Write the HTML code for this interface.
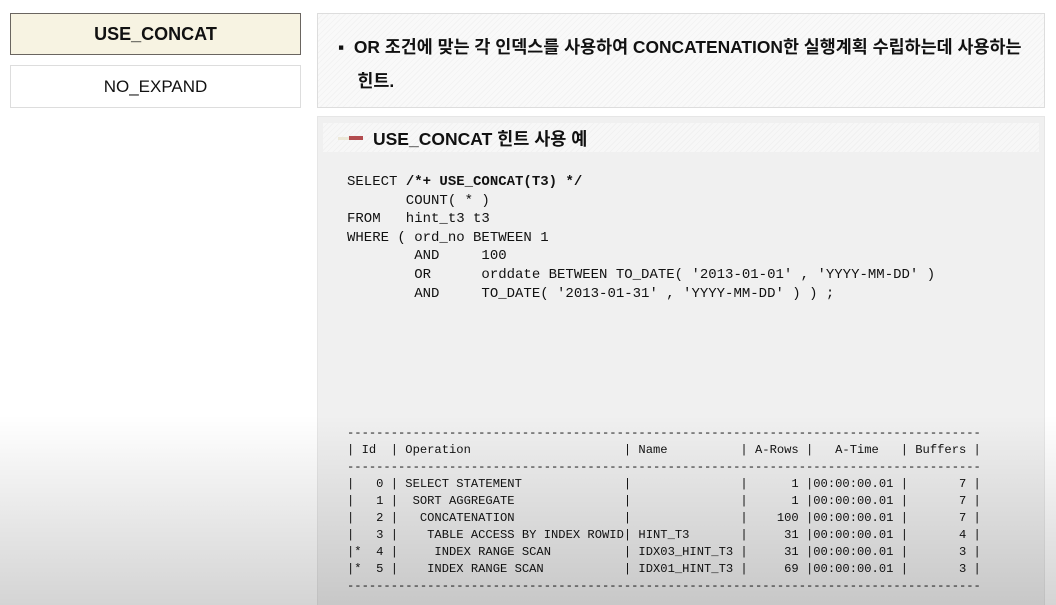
<!DOCTYPE html>
<html><head><meta charset="utf-8"><style>
*{margin:0;padding:0;box-sizing:border-box}
html,body{width:1056px;height:605px;overflow:hidden}
body{background:#fff;position:relative;font-family:"Liberation Sans","Noto Sans CJK KR",sans-serif;color:#111}
.b1{position:absolute;left:10px;top:13px;width:291px;height:42px;background:#f7f3e2;border:1px solid #6a6560;text-align:center;font-weight:bold;font-size:18px;line-height:40px}
.b2{position:absolute;left:10px;top:65px;width:291px;height:43px;background:#fff;border:1px solid #ddd;text-align:center;font-size:17px;line-height:41px}
.p1{position:absolute;left:317px;top:13px;width:728px;height:95px;background:repeating-linear-gradient(135deg,#f9f9f9 0 3px,#f3f3f3 3px 4px);border:1px solid #ddd}
.p1 .t{position:absolute;left:20px;top:16px;font-weight:bold;font-size:17.4px;line-height:34px;white-space:nowrap}
.p2{position:absolute;left:317px;top:116px;width:728px;height:489px;background:#f0f0f0;border:1px solid #e6e6e6;border-bottom:none}
.strip{position:absolute;left:5px;top:6px;width:716px;height:29px;background:repeating-linear-gradient(135deg,#f7f7f7 0 3px,#f1f1f1 3px 4px)}
.strip .d1{position:absolute;left:15px;top:14px;width:11px;height:3px;background:#ece8d8}
.strip .d2{position:absolute;left:26px;top:13px;width:14px;height:4px;background:#b24c4f}
.strip .tt{position:absolute;left:50px;top:3px;font-weight:bold;font-size:17.5px}
pre{position:absolute;font-family:"Liberation Mono",monospace;color:#111}
.code{left:29px;top:56px;font-size:14px;line-height:18.6px}
.tab{left:29px;top:308px;font-size:12.15px;line-height:17px}
.ov{position:absolute;left:0;top:415px;width:1056px;height:190px;background:linear-gradient(rgba(0,0,0,0),rgba(0,0,0,0.17));pointer-events:none}
</style></head><body>
<div class="b1">USE_CONCAT</div>
<div class="b2">NO_EXPAND</div>
<div class="p1"><div class="t">▪&nbsp; OR 조건에 맞는 각 인덱스를 사용하여 CONCATENATION한 실행계획 수립하는데 사용하는<br>&nbsp;&nbsp;&nbsp;&nbsp;힌트.</div></div>
<div class="p2">
<div class="strip"><div class="d1"></div><div class="d2"></div><div class="tt">USE_CONCAT 힌트 사용 예</div></div>
<pre class="code">SELECT <b>/*+ USE_CONCAT(T3) */</b>
       COUNT( * )
FROM   hint_t3 t3
WHERE ( ord_no BETWEEN 1
        AND     100
        OR      orddate BETWEEN TO_DATE( '2013-01-01' , 'YYYY-MM-DD' )
        AND     TO_DATE( '2013-01-31' , 'YYYY-MM-DD' ) ) ;</pre>
<pre class="tab">---------------------------------------------------------------------------------------
| Id  | Operation                     | Name          | A-Rows |   A-Time   | Buffers |
---------------------------------------------------------------------------------------
|   0 | SELECT STATEMENT              |               |      1 |00:00:00.01 |       7 |
|   1 |  SORT AGGREGATE               |               |      1 |00:00:00.01 |       7 |
|   2 |   CONCATENATION               |               |    100 |00:00:00.01 |       7 |
|   3 |    TABLE ACCESS BY INDEX ROWID| HINT_T3       |     31 |00:00:00.01 |       4 |
|*  4 |     INDEX RANGE SCAN          | IDX03_HINT_T3 |     31 |00:00:00.01 |       3 |
|*  5 |    INDEX RANGE SCAN           | IDX01_HINT_T3 |     69 |00:00:00.01 |       3 |
---------------------------------------------------------------------------------------</pre>
</div>
<div class="ov"></div>
</body></html>
